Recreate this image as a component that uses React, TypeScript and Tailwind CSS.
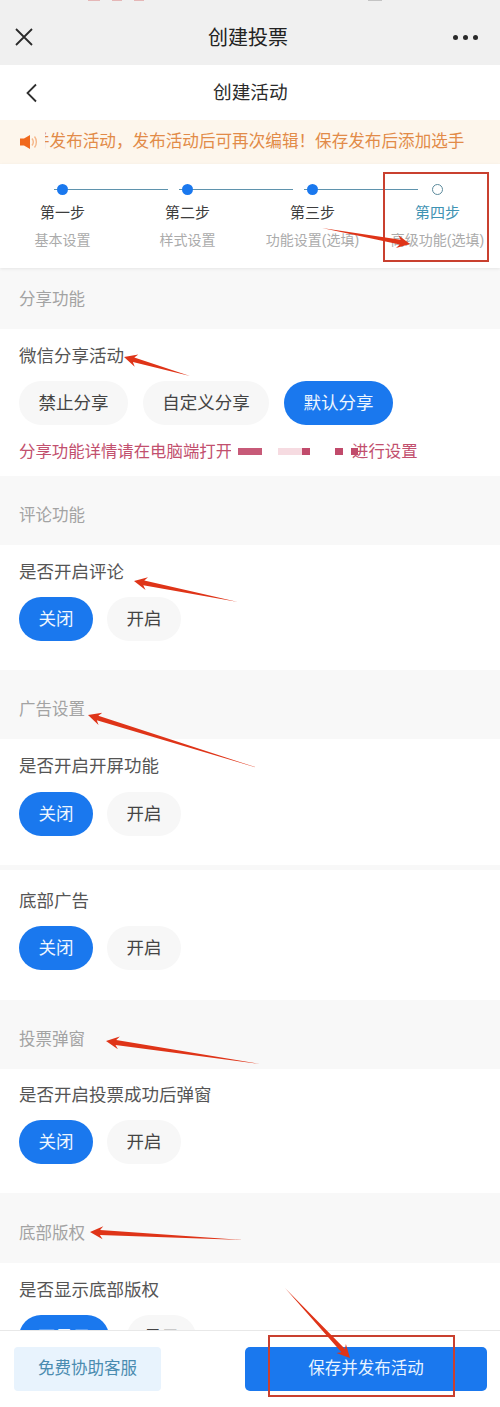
import type { ReactNode } from "react";

const FONT = "font-['Liberation_Sans','Noto_Sans_CJK_SC',sans-serif]";

const steps = [
  { title: "第一步", sub: "基本设置", done: true },
  { title: "第二步", sub: "样式设置", done: true },
  { title: "第三步", sub: "功能设置(选填)", done: true },
  { title: "第四步", sub: "高级功能(选填)", done: false },
];

// tail -> tip, the annotation arrows drawn over the screenshot
const arrows = [
  [322, 228, 410, 244],
  [190, 376, 124, 357],
  [238, 602, 134, 581],
  [258, 768, 88, 715],
  [260, 1064, 106, 1041],
  [243, 1240, 90, 1232],
  [285, 1288, 350, 1358],
];

function arrowPoints([x1, y1, x2, y2]: number[]) {
  const len = Math.hypot(x2 - x1, y2 - y1);
  const ux = (x2 - x1) / len;
  const uy = (y2 - y1) / len;
  const nx = -uy;
  const ny = ux;
  const at = (back: number, side: number) =>
    `${(x2 - ux * back + nx * side).toFixed(1)},${(y2 - uy * back + ny * side).toFixed(1)}`;
  return [
    `${x1},${y1}`,
    at(10, 2.4),
    at(13, 6.5),
    at(0, 0),
    at(13, -6.5),
    at(10, -2.4),
  ].join(" ");
}

function Pill({ children, active, w }: { children: ReactNode; active?: boolean; w: string }) {
  return (
    <div
      className={`${w} h-[44px] rounded-full flex items-center justify-center text-[17.5px] ${
        active ? "bg-[#1a78ee] text-[#eef6ff]" : "bg-[#f7f7f7] text-[#444444]"
      }`}
    >
      {children}
    </div>
  );
}

function SectionHead({ children, h = "h-[69px]", pt = "pt-[10px]" }: { children: ReactNode; h?: string; pt?: string }) {
  return (
    <div className={`${h} ${pt} bg-[#f8f8f8] flex items-center px-[19px] text-[16.5px] text-[#a3a3a3]`}>
      {children}
    </div>
  );
}

function SwitchCard({
  label,
  h = "h-[125px]",
  pt = "pt-[12px]",
  gap = "mt-[11px]",
}: {
  label: string;
  h?: string;
  pt?: string;
  gap?: string;
}) {
  return (
    <div className={`${h} ${pt} bg-white px-[19px]`}>
      <div className="h-[30px] flex items-center text-[17.5px] text-[#555555]">{label}</div>
      <div className={`${gap} flex gap-[14px]`}>
        <Pill active w="w-[74px]">关闭</Pill>
        <Pill w="w-[74px]">开启</Pill>
      </div>
    </div>
  );
}

export default function App() {
  return (
    <div className={`${FONT} relative w-[500px] h-[1407px] overflow-hidden flex flex-col bg-white`}>
      {/* wechat title bar */}
      <div className="h-[65px] shrink-0 bg-[#f0f0f0] flex items-center justify-between pl-[15px] pr-[22px] pt-[9px] relative">
        {/* bottom edge of the phone status bar, cropped off in the shot */}
        <div className="absolute left-[88px] top-0 flex gap-[12px]">
          <span className="w-[12px] h-[1px] bg-[#e5b7b7]" />
          <span className="w-[10px] h-[1px] bg-[#e5b7b7]" />
          <span className="w-[10px] h-[1px] bg-[#e5b7b7]" />
        </div>
        <span className="absolute left-[368px] top-0 w-[14px] h-[1px] bg-[#c4c4c4]" />
        <svg width="18" height="18" viewBox="0 0 18 18" fill="none" stroke="#2a2a2a" strokeWidth="1.8">
          <path d="M1 1L17 17M17 1L1 17" />
        </svg>
        <div className="text-[20px] text-[#222222] absolute left-[208px] top-[23px] leading-[30px]">创建投票</div>
        <div className="flex gap-[5px]">
          <span className="w-[5px] h-[5px] rounded-full bg-[#2a2a2a]" />
          <span className="w-[5px] h-[5px] rounded-full bg-[#2a2a2a]" />
          <span className="w-[5px] h-[5px] rounded-full bg-[#2a2a2a]" />
        </div>
      </div>

      {/* nav */}
      <div className="h-[55px] shrink-0 bg-white flex items-center relative pl-[25px]">
        <svg width="13" height="20" viewBox="0 0 13 20" fill="none" stroke="#2f2f2f" strokeWidth="1.8">
          <path d="M11 1.5L2.5 10L11 18.5" />
        </svg>
        <div className="absolute left-[213px] top-[13px] text-[18.7px] leading-[30px] text-[#2b2b2b]">创建活动</div>
      </div>

      {/* notice */}
      <div className="h-[44px] shrink-0 bg-[#fdf6ec] flex items-center pl-[20px]">
        <svg width="18" height="16" viewBox="0 0 18 16" className="shrink-0">
          <path d="M0 4.5h4L10 1v14l-6-3.5H0z" fill="#f0691d" />
          <path d="M12 4.5c1.5 2 1.5 5 0 7M14.5 2.5c2.5 3 2.5 8 0 11" fill="none" stroke="#f5b78a" strokeWidth="1.4" />
        </svg>
        <div className="ml-[7px] flex-1 overflow-hidden whitespace-nowrap text-[16.6px] text-[#e28b48]">
          <span className="ml-[-12px]">{"并发布活动\uFF0C发布活动后可再次编辑\uFF01保存发布后添加选手"}</span>
        </div>
      </div>

      {/* steps */}
      <div className="h-[104px] shrink-0 bg-white grid grid-cols-4 pt-[20px] shadow-[0_1px_3px_rgba(0,0,0,0.08)] relative">
        {steps.map((s, i) => (
          <div key={s.title} className="relative flex flex-col items-center">
            {i < 3 && <div className="absolute left-[54px] top-[5px] w-[114px] h-[1px] bg-[#5f93ad]" />}
            {s.done ? (
              <div className="relative w-[11px] h-[11px] rounded-full bg-[#1a78ee]" />
            ) : (
              <div className="relative w-[11px] h-[11px] rounded-full border border-[#5b8a9c] bg-white" />
            )}
            <div className={`mt-[6px] text-[15px] leading-[24px] ${s.done ? "text-[#3d3d3d]" : "text-[#3f93b3]"}`}>
              {s.title}
            </div>
            <div className="mt-[3px] text-[14px] leading-[24px] whitespace-nowrap text-[#ababab]">{s.sub}</div>
          </div>
        ))}
      </div>

      {/* scrolling form, cut off by the footer */}
      <div className="flex-1 min-h-0 overflow-hidden">
        <SectionHead h="h-[61px]" pt="pt-[2px]">分享功能</SectionHead>
        <div className="h-[147px] bg-white px-[19px] pt-[12px]">
          <div className="h-[30px] flex items-center text-[17.5px] text-[#555555]">微信分享活动</div>
          <div className="mt-[10px] flex gap-[15px]">
            <Pill w="w-[109px]">禁止分享</Pill>
            <Pill w="w-[126px]">自定义分享</Pill>
            <Pill active w="w-[109px]">默认分享</Pill>
          </div>
          <div className="mt-[14px] h-[24px] flex items-center text-[16.4px] text-[#c2506e] whitespace-nowrap">
            <span className="w-[212px] overflow-hidden shrink-0">分享功能详情请在电脑端打开</span>
            <span className="ml-[7px] w-[24px] h-[7px] bg-[#c75a78]" />
            <span className="ml-[16px] w-[24px] h-[7px] bg-[#f6dbe1]" />
            <span className="w-[8px] h-[7px] bg-[#c14a6b]" />
            <span className="ml-[25px] w-[8px] h-[7px] bg-[#c14a6b]" />
            <span className="ml-[8px] w-[7px] h-[7px] bg-[#c14a6b]" />
            <span className="ml-[-6px]">进行设置</span>
          </div>
        </div>

        <SectionHead>评论功能</SectionHead>
        <SwitchCard label="是否开启评论" gap="mt-[10px]" />

        <SectionHead>广告设置</SectionHead>
        <SwitchCard label="是否开启开屏功能" h="h-[126px]" />
        <div className="h-[5px] bg-[#f8f8f8]" />
        <SwitchCard label="底部广告" h="h-[130px]" pt="pt-[16px]" gap="mt-[10px]" />

        <SectionHead>投票弹窗</SectionHead>
        <SwitchCard label="是否开启投票成功后弹窗" h="h-[124px]" pt="pt-[11px]" gap="mt-[10px]" />

        <SectionHead h="h-[70px]">底部版权</SectionHead>
        <div className="bg-white px-[19px] pt-[12px]">
          <div className="h-[30px] flex items-center text-[17.5px] text-[#555555]">是否显示底部版权</div>
          <div className="mt-[10px] flex gap-[18px]">
            <Pill active w="w-[90px]">不显示</Pill>
            <Pill w="w-[69px]">显示</Pill>
          </div>
        </div>
      </div>

      {/* footer */}
      <div className="h-[77px] shrink-0 bg-white border-t border-[#e8e8e8] flex items-start justify-between pl-[14px] pr-[13px] pt-[16px] relative">
        <button className="w-[147px] h-[44px] pb-[2px] rounded-[4px] bg-[#e8f3fd] text-[16.5px] text-[#4a8bb0]">免费协助客服</button>
        <button className="w-[242px] h-[44px] pb-[2px] rounded-[5px] bg-[#1a78ee] text-[16.5px] text-[#e8f4ff]">保存并发布活动</button>
      </div>

      {/* red annotations pasted over the screenshot */}
      <div className="absolute left-[383px] top-[172px] w-[106px] h-[90px] border-2 border-[#c9402f]" />
      <div className="absolute left-[268px] top-[1335px] w-[187px] h-[62px] border-2 border-[#c9402f]" />
      <svg className="absolute left-0 top-0 pointer-events-none" width="500" height="1407">
        {arrows.map((a) => (
          <polygon key={a.join("-")} points={arrowPoints(a)} fill="#df3418" />
        ))}
      </svg>
    </div>
  );
}
